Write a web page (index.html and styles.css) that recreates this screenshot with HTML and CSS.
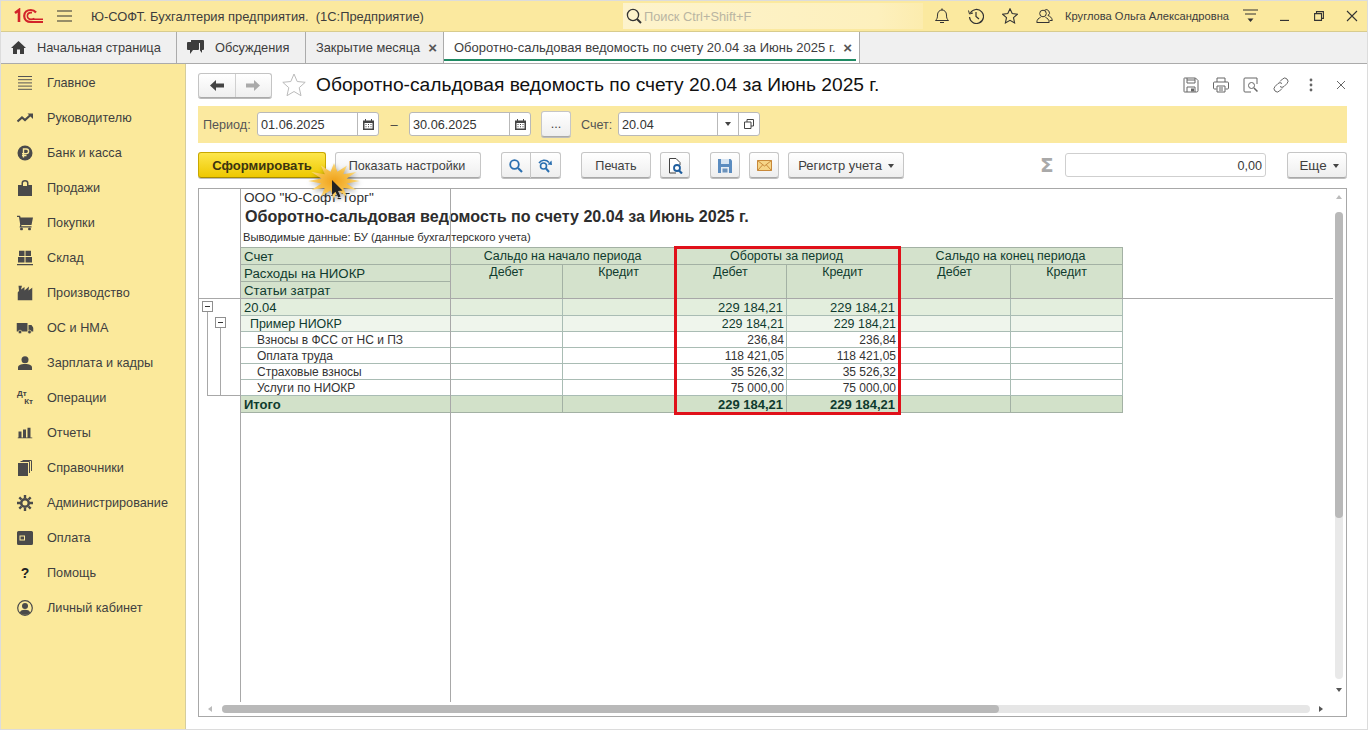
FILE: index.html
```html
<!DOCTYPE html>
<html lang="ru">
<head>
<meta charset="utf-8">
<title>1С</title>
<link rel="stylesheet" href="styles.css">
</head>
<body>
<div class="app">
  <header class="top">
    <svg class="logo" viewBox="0 0 30 16" width="30" height="16"><path d="M1 5 L5 2 V14" fill="none" stroke="#d2232a" stroke-width="2.6"/><path d="M22 4.5 C20.5 2.6 18.8 2 16.8 2 C13 2 10.2 4.5 10.2 8 C10.2 11.5 13 14 16.8 14 H29" fill="none" stroke="#d2232a" stroke-width="2.2"/><path d="M20.5 10.5 C19.6 11.1 18.3 11.4 17 11.4 C14.8 11.4 13.4 10 13.4 8 C13.4 6 14.8 4.6 17 4.6 H18 M16 11.2 H29" fill="none" stroke="#d2232a" stroke-width="1.6"/></svg>
    <svg class="burger" viewBox="0 0 15 12" width="15" height="12"><path d="M0 1h15M0 6h15M0 11h15" stroke="#333" stroke-width="1.2"/></svg>
    <div class="apptitle">Ю-СОФТ. Бухгалтерия предприятия.&nbsp; (1С:Предприятие)</div>
    <div class="search">
      <svg viewBox="0 0 16 16" width="16" height="16"><circle cx="7" cy="7" r="5.6" fill="none" stroke="#333" stroke-width="1.3"/><path d="M11 11l4 4" stroke="#333" stroke-width="2"/></svg>
      <span>Поиск Ctrl+Shift+F</span>
    </div>
    <svg class="ticon i-bell" viewBox="0 0 16 16" width="16" height="16"><path d="M1.5 12.5c1.5-1.5 2-2.5 2-5.5 0-3 2-5 4.5-5s4.500 2 4.500 5c0 3 .5 4 2 5.500z" fill="none" stroke="#333"/><path d="M6 14.500h4M8 .5v1.500" stroke="#333" stroke-width="1.200"/></svg>
    <svg class="ticon i-hist" viewBox="0 0 16 16" width="16" height="16"><path d="M2.400 5A7 7 0 1 1 1.500 9" fill="none" stroke="#333" stroke-width="1.200"/><path d="M0.500 2.500l1 3.500 3.500-1" fill="none" stroke="#333"/><path d="M8 4v4.500l3 2.500" fill="none" stroke="#333" stroke-width="1.200"/></svg>
    <svg class="ticon i-star" viewBox="0 0 16 16" width="16" height="16"><path d="M8 .8l2.200 4.800 5.200.6-3.900 3.500 1.100 5.200L8 12.300l-4.600 2.600 1.100-5.200L.6 6.200l5.200-.6z" fill="none" stroke="#333" stroke-width="1.100"/></svg>
    <svg class="ticon i-users" viewBox="0 0 17 16" width="17" height="16"><circle cx="7" cy="5.500" r="3.300" fill="none" stroke="#333"/><path d="M.8 14.500c0-3 2-4.500 3.700-5M13.200 14.500c0-3-2-4.500-3.700-5M.8 14.500h12.400" fill="none" stroke="#333"/><path d="M8.500 2.200a3 3 0 1 1 3.500 5.300c2 .8 4 2 4.300 5h-2.600" fill="none" stroke="#333"/></svg>
    <div class="username">Круглова Ольга Александровна</div>
    <svg class="ticon i-fn" viewBox="0 0 15 14" width="15" height="14"><path d="M0 1h15M2 5h11" stroke="#333" stroke-width="1.100"/><path d="M4.500 9.500h6l-3 3.500z" fill="#333"/></svg>
    <svg class="ticon i-min" viewBox="0 0 10 10" width="10" height="10"><path d="M0 9.500h9" stroke="#333" stroke-width="1.300"/></svg>
    <svg class="ticon i-max" viewBox="0 0 10 10" width="10" height="10"><path d="M2.500 2.500V.6h6.900v6.800H7.500M.6 2.600h6.900v6.800H.6z" fill="none" stroke="#333" stroke-width="1.100"/></svg>
    <svg class="ticon i-x" viewBox="0 0 12 12" width="12" height="12"><path d="M1 1l10 10M11 1L1 11" stroke="#333" stroke-width="1.100"/></svg>
  </header>

  <nav class="tabs">
    <div class="tab t-home"><svg viewBox="0 0 15 13" width="15" height="13"><path d="M7.500 0L15 7h-2v6H9V8.500H6V13H2V7H0z" fill="#3d3d3d"/></svg><span>Начальная страница</span></div>
    <div class="tab t-disc"><svg viewBox="0 0 17 15" width="17" height="15"><path d="M4 0h12a1 1 0 0 1 1 1v8a1 1 0 0 1-1 1h-1v3l-2-2.400V3H4z" fill="#3d3d3d"/><path d="M1 2h10a1 1 0 0 1 1 1v6a1 1 0 0 1-1 1H6l-3 4v-4H1a1 1 0 0 1-1-1V3a1 1 0 0 1 1-1z" fill="#3d3d3d"/></svg><span>Обсуждения</span></div>
    <div class="tab t-close"><span>Закрытие месяца</span><b class="tabx">×</b></div>
    <div class="tab t-active"><span>Оборотно-сальдовая ведомость по счету 20.04 за Июнь 2025 г.</span><b class="tabx">×</b></div>
  </nav>

  <div class="body">
    <aside class="side">
      <div class="item"><svg viewBox="0 0 16 14" width="16" height="14"><path d="M1 .5h14M1 3.700h14M1 6.900h14M1 10.100h14M1 13.300h14" stroke="#555" stroke-width="1"/></svg><span>Главное</span></div>
      <div class="item"><svg viewBox="0 0 17 10" width="17" height="10"><path d="M1 8.500l4.500-4 3 2.500L14 2" fill="none" stroke="#4a4a4a" stroke-width="2.200"/><path d="M11 .5h5.500V6z" fill="#4a4a4a"/></svg><span>Руководителю</span></div>
      <div class="item"><svg viewBox="0 0 16 16" width="16" height="16"><circle cx="8" cy="8" r="7.500" fill="#4a4a4a"/><path d="M6.500 12.500V4h2.800a2.300 2.300 0 0 1 0 4.600H5M5 10.500h4.500" fill="none" stroke="#fbe99b" stroke-width="1.400"/></svg><span>Банк и касса</span></div>
      <div class="item"><svg viewBox="0 0 14 16" width="14" height="16"><path d="M0 5h3.500V3a3.500 3 0 0 1 7 0v2H14v11H0z" fill="#4a4a4a"/><path d="M5 6V3a2 1.600 0 0 1 4 0v3z" fill="#fbe99b"/></svg><span>Продажи</span></div>
      <div class="item"><svg viewBox="0 0 16 15" width="16" height="15"><path d="M0 0h3l.600 2H16l-1.500 7.500H4.500l-.3 1.200H14.500V12H2.600L3.200 9 2 1.500H0z" fill="#4a4a4a"/><circle cx="4.500" cy="13.500" r="1.500" fill="#4a4a4a"/><circle cx="12.500" cy="13.500" r="1.500" fill="#4a4a4a"/></svg><span>Покупки</span></div>
      <div class="item"><svg viewBox="0 0 16 15" width="16" height="15"><path d="M2 0h5.500v5.500H2zM8.500 0H14v5.500H8.500zM1 6.500h6.500V12H1zM8.500 6.500H15V12H8.500zM0 13.500h16V15H0z" fill="#4a4a4a"/></svg><span>Склад</span></div>
      <div class="item"><svg viewBox="0 0 15 15" width="15" height="15"><path d="M1 0h3.500L3.500 4 7 1.500V5l4.500-4L11 5l4-3v13H0V7l1.500-1.500z" fill="#4a4a4a"/></svg><span>Производство</span></div>
      <div class="item"><svg viewBox="0 0 17 12" width="17" height="12"><path d="M0 1h11v8.500H0zM12 3h3l2 3v3.500h-5z" fill="#4a4a4a"/><circle cx="3.500" cy="10" r="1.800" fill="#4a4a4a" stroke="#fbe99b" stroke-width=".6"/><circle cx="13" cy="10" r="1.800" fill="#4a4a4a" stroke="#fbe99b" stroke-width=".6"/></svg><span>ОС и НМА</span></div>
      <div class="item"><svg viewBox="0 0 14 14" width="14" height="14"><circle cx="7" cy="3.800" r="3.500" fill="#4a4a4a"/><path d="M0 14v-2.500C0 9.500 2.500 8 7 8s7 1.500 7 3.500V14z" fill="#4a4a4a"/></svg><span>Зарплата и кадры</span></div>
      <div class="item"><span class="dtkt"><i>Дт</i><i>Кт</i></span><span>Операции</span></div>
      <div class="item"><svg viewBox="0 0 15 11" width="15" height="11"><path d="M1 4h3v6H1zM5.500 2h3v8h-3zM10 0h3v10h-3zM0 10h15v1H0z" fill="#4a4a4a"/></svg><span>Отчеты</span></div>
      <div class="item"><svg viewBox="0 0 14 16" width="14" height="16"><path d="M0 3h10v13H0z" fill="#4a4a4a"/><path d="M2.500 1.500h9V13M4.500 .5H13.500V11" fill="none" stroke="#4a4a4a"/></svg><span>Справочники</span></div>
      <div class="item"><svg viewBox="0 0 16 16" width="16" height="16"><circle cx="8" cy="8" r="3.800" fill="none" stroke="#4a4a4a" stroke-width="2.600"/><path d="M8 0v3M8 13v3M0 8h3M13 8h3M2.300 2.300l2.200 2.200M11.500 11.500l2.200 2.200M13.700 2.300l-2.200 2.200M4.500 11.500l-2.200 2.200" stroke="#4a4a4a" stroke-width="2.400"/></svg><span>Администрирование</span></div>
      <div class="item"><svg viewBox="0 0 16 14" width="16" height="14"><path d="M1.500 0H14.500a1.500 1.500 0 0 1 1.500 1.500v11a1.500 1.500 0 0 1-1.500 1.500H1.500A1.500 1.500 0 0 1 0 12.500V1.500A1.500 1.500 0 0 1 1.500 0z" fill="#4a4a4a"/><rect x="3" y="5" width="4.500" height="4" fill="none" stroke="#fbe99b"/></svg><span>Оплата</span></div>
      <div class="item"><span class="qmark">?</span><span>Помощь</span></div>
      <div class="item"><svg viewBox="0 0 16 16" width="16" height="16"><circle cx="8" cy="8" r="7.300" fill="none" stroke="#4a4a4a" stroke-width="1.200"/><circle cx="8" cy="6" r="3" fill="#4a4a4a"/><path d="M2.800 12.500C3.500 10.500 5.500 9.800 8 9.800s4.500.7 5.200 2.700C12 14 10 14.800 8 14.800s-4-.8-5.200-2.300z" fill="#4a4a4a"/></svg><span>Личный кабинет</span></div>
    </aside>

    <main class="main">
      <div class="titlebar">
        <div class="navpair">
          <div class="navb"><svg viewBox="0 0 14 11" width="14" height="11"><path d="M0 5.500L6 0v3.500h8v4H6V11z" fill="#444"/></svg></div>
          <div class="navb"><svg viewBox="0 0 14 11" width="14" height="11"><path d="M14 5.500L8 0v3.500H0v4h8V11z" fill="#aaa"/></svg></div>
        </div>
        <svg class="bigstar" viewBox="0 0 24 24" width="24" height="24"><path d="M12 1l3.200 7.500 8 .8-6 5.400 1.800 8L12 18.500l-7 4.200 1.800-8-6-5.400 8-.8z" fill="#fff" stroke="#bbb"/></svg>
        <h1>Оборотно-сальдовая ведомость по счету 20.04 за Июнь 2025 г.</h1>
        <div class="formtools">
          <svg viewBox="0 0 16 16" width="16" height="16"><path d="M1.500 1h11l2.500 2.500v10a1.500 1.500 0 0 1-1.500 1.500h-12A.5.5 0 0 1 1 14.500V1.500A.5.5 0 0 1 1.500 1z" fill="none" stroke="#666"/><path d="M4 1v5h8V1M4 3h8M4 15v-5h8v5" fill="none" stroke="#666"/><rect x="8" y="11.500" width="3" height="3" fill="#666"/></svg>
          <svg viewBox="0 0 16 16" width="16" height="16"><path d="M4 5V1h8v4M3.500 12H1.500A1 1 0 0 1 .5 11V6a1 1 0 0 1 1-1h13a1 1 0 0 1 1 1v5a1 1 0 0 1-1 1h-2" fill="none" stroke="#666"/><path d="M4 9h8v6H4zM6 11h4M6 13h4" fill="none" stroke="#666"/></svg>
          <svg viewBox="0 0 16 16" width="16" height="16"><path d="M8 15H2a1 1 0 0 1-1-1V2a1 1 0 0 1 1-1h12v6" fill="none" stroke="#666"/><circle cx="8.500" cy="8.500" r="3" fill="none" stroke="#666"/><path d="M11 11l3.500 3.500" stroke="#666" stroke-width="1.500"/></svg>
          <svg viewBox="0 0 16 16" width="16" height="16"><path d="M7 4.500L9.500 2a3 3 0 0 1 4.500 4.500L11 9.500a3 3 0 0 1-4 0M9 11.500L6.500 14A3 3 0 0 1 2 9.500L5 6.500a3 3 0 0 1 4 0" fill="none" stroke="#666"/></svg>
          <svg viewBox="0 0 16 16" width="16" height="16"><circle cx="8" cy="3" r="1.400" fill="#666"/><circle cx="8" cy="8" r="1.400" fill="#666"/><circle cx="8" cy="13" r="1.400" fill="#666"/></svg>
          <svg viewBox="0 0 16 16" width="16" height="16"><path d="M4 4l8 8M12 4l-8 8" stroke="#666"/></svg>
        </div>
      </div>

      <div class="filter">
        <label class="l-period">Период:</label>
        <div class="inp w-date"><span class="val">01.06.2025</span><span class="cell"><svg viewBox="0 0 11 11" width="11" height="11"><path d="M0 1.500h11V11H0zM2.500 0v2M8.500 0v2" fill="#444"/><path d="M2.500 0v2M8.500 0v2" stroke="#444"/><path d="M1.500 4h8v5.500h-8z" fill="#fff"/><path d="M2.500 5h1v1h-1zM5 5h1v1H5zM7.500 5h1v1h-1zM2.500 7.300h1v1h-1zM5 7.300h1v1H5zM7.500 7.300h1v1h-1z" fill="#444"/></svg></span></div>
        <span class="dash">–</span>
        <div class="inp w-date"><span class="val">30.06.2025</span><span class="cell"><svg viewBox="0 0 11 11" width="11" height="11"><path d="M0 1.500h11V11H0zM2.500 0v2M8.500 0v2" fill="#444"/><path d="M2.500 0v2M8.500 0v2" stroke="#444"/><path d="M1.500 4h8v5.500h-8z" fill="#fff"/><path d="M2.500 5h1v1h-1zM5 5h1v1H5zM7.500 5h1v1h-1zM2.500 7.300h1v1h-1zM5 7.300h1v1H5zM7.500 7.300h1v1h-1z" fill="#444"/></svg></span></div>
        <div class="btn b-dots">...</div>
        <label class="l-acc">Счет:</label>
        <div class="inp w-acc"><span class="val">20.04</span><span class="cell"><i class="caret"></i></span><span class="cell"><svg viewBox="0 0 10 10" width="10" height="10"><path d="M3 3V.5h6.500V7H7M.5 3h6.500v6.500H.5z" fill="none" stroke="#444"/></svg></span></div>
      </div>

      <div class="cmd">
        <div class="btn b-go">Сформировать</div>
        <div class="btn b-show">Показать настройки</div>
        <div class="pair">
          <div class="btn half"><svg viewBox="0 0 14 14" width="14" height="14"><circle cx="5.500" cy="5.500" r="4.300" fill="none" stroke="#2a6fb0" stroke-width="1.800"/><path d="M9 9l4 4" stroke="#2a6fb0" stroke-width="2.200"/></svg></div>
          <div class="btn half"><svg viewBox="0 0 15 14" width="15" height="14"><circle cx="5.500" cy="7" r="3" fill="none" stroke="#2a6fb0" stroke-width="1.600"/><path d="M8 9.500l3 3.500" stroke="#2a6fb0" stroke-width="2"/><path d="M1 4C3 1 8 0 11 3.500" fill="none" stroke="#2a6fb0" stroke-width="1.500"/><path d="M9.500 5.500L14 6l-.5-4.500z" fill="#2a6fb0"/></svg></div>
        </div>
        <div class="btn b-print">Печать</div>
        <div class="btn b-ico b-prev"><svg viewBox="0 0 15 16" width="15" height="16"><path d="M1.500 15V.5H8l4 4V7" fill="#fff" stroke="#444"/><path d="M1.500 15H8" stroke="#444"/><circle cx="9" cy="10" r="3" fill="#fff" stroke="#1f5e9e" stroke-width="1.800"/><path d="M11 12.500l3 3" stroke="#1f5e9e" stroke-width="2.200"/></svg></div>
        <div class="btn b-ico b-save"><svg viewBox="0 0 14 14" width="14" height="14"><path d="M0 0h12.500L14 1.500V14H0z" fill="#5b8cc0"/><path d="M3 0h8v5H3z" fill="#d7e5f3"/><path d="M3 8h8v6H3z" fill="#e8eef5"/><path d="M4.500 9.500h5v4h-5z" fill="#6c93bb"/></svg></div>
        <div class="btn b-ico b-mail"><svg viewBox="0 0 15 11" width="15" height="11"><path d="M.5.500h14v10H.500z" fill="#f6d587" stroke="#c8893a"/><path d="M.5.500l7 5.500 7-5.500M.5 10.500l5-5.500M14.500 10.500l-5-5.500" fill="none" stroke="#c8893a"/></svg></div>
        <div class="btn b-reg">Регистр учета<i class="caret"></i></div>
        <div class="sigma">Σ</div>
        <div class="sumfield">0,00</div>
        <div class="btn b-more">Еще<i class="caret"></i></div>
      </div>

      <section class="report">
        <div class="gutter">
          <div class="tree t1"></div>
          <div class="tree t2"></div>
          <div class="minus m1"></div>
          <div class="minus m2"></div>
        </div>
        <div class="sheet">
          <div class="org">ООО "Ю-Софт-Торг"</div>
          <div class="rtitle">Оборотно-сальдовая ведомость по счету 20.04 за Июнь 2025 г.</div>
          <div class="rnote">Выводимые данные: БУ (данные бухгалтерского учета)</div>
          <table class="osv">
            <colgroup><col class="c0"><col class="c1"><col class="c2"><col class="c1"><col class="c2"><col class="c1"><col class="c2"></colgroup>
            <thead>
              <tr class="h1"><th class="left">Счет</th><th colspan="2">Сальдо на начало периода</th><th colspan="2">Обороты за период</th><th colspan="2">Сальдо на конец периода</th></tr>
              <tr class="h2"><th class="left">Расходы на НИОКР</th><th rowspan="2" class="sub">Дебет</th><th rowspan="2" class="sub">Кредит</th><th rowspan="2" class="sub">Дебет</th><th rowspan="2" class="sub">Кредит</th><th rowspan="2" class="sub">Дебет</th><th rowspan="2" class="sub">Кредит</th></tr>
              <tr class="h3"><th class="left">Статьи затрат</th></tr>
            </thead>
            <tbody>
              <tr class="g1"><td class="name">20.04</td><td></td><td></td><td>229 184,21</td><td>229 184,21</td><td></td><td></td></tr>
              <tr class="g2"><td class="name n1">Пример НИОКР</td><td></td><td></td><td>229 184,21</td><td>229 184,21</td><td></td><td></td></tr>
              <tr class="d"><td class="name n2">Взносы в ФСС от НС и ПЗ</td><td></td><td></td><td>236,84</td><td>236,84</td><td></td><td></td></tr>
              <tr class="d"><td class="name n2">Оплата труда</td><td></td><td></td><td>118 421,05</td><td>118 421,05</td><td></td><td></td></tr>
              <tr class="d"><td class="name n2">Страховые взносы</td><td></td><td></td><td>35 526,32</td><td>35 526,32</td><td></td><td></td></tr>
              <tr class="d"><td class="name n2">Услуги по НИОКР</td><td></td><td></td><td>75 000,00</td><td>75 000,00</td><td></td><td></td></tr>
              <tr class="tot"><td class="name">Итого</td><td></td><td></td><td>229 184,21</td><td>229 184,21</td><td></td><td></td></tr>
            </tbody>
          </table>
        </div>
        <div class="freeze-v"></div>
        <div class="freeze-h"></div>
        <div class="redbox"></div>
        <div class="vtrack"><div class="vthumb"></div></div>
        <div class="htrack"><div class="hthumb"></div></div>
        <i class="arr a-up"></i><i class="arr a-down"></i><i class="arr a-left"></i><i class="arr a-right"></i>
      </section>
    </main>
  </div>

  <svg class="spark" viewBox="0 0 54 38" width="54" height="38">
    <defs><radialGradient id="sg" cx=".5" cy=".5" r=".5"><stop offset="0" stop-color="#f0a21a"/><stop offset=".6" stop-color="#f6bd45"/><stop offset="1" stop-color="#fbe08a"/></radialGradient></defs>
    <path d="M54 19L40.600 21.500 50.500 28 37.200 25.700 41 34.600 31.400 28.200 28 37 24.600 28.200 15 34.600 18.800 25.700 5.500 28 15.400 21.500 2 19 15.400 16.500 5.500 10 18.800 12.300 15 3.400 24.600 9.800 28 1 31.400 9.800 41 3.400 37.200 12.300 50.500 10 40.600 16.500z" fill="url(#sg)"/>
    <path d="M26 18v15l3.500-3.200 2.800 5.700 2.300-1.100-2.700-5.500 4.600-.4z" fill="#222"/>
  </svg>
</div>
</body>
</html>
```
FILE: styles.css
```css
* { box-sizing: border-box; }
html, body { margin: 0; padding: 0; height: 100%; background: #fff; }
body { font-family: "Liberation Sans", Arial, sans-serif; font-size: 13px; color: #3a3a3a; overflow: hidden; }
.app { position: relative; width: 1368px; height: 730px; border: 1px solid #dcdcdc; display: flex; flex-direction: column; overflow: hidden; }

/* top bar */
.top { height: 31px; flex: none; background: #fbe99f; border-bottom: 1px solid #d8cc8e; display: flex; align-items: center; }
.logo { margin-left: 13px; }
.burger { margin-left: 13px; }
.apptitle { margin-left: 19px; width: 532px; font-size: 12.9px; color: #3d3d3d; white-space: nowrap; }
.search { width: 300px; height: 26px; display: flex; align-items: center; gap: 2px; padding-left: 3px; font-size: 12.8px; color: #b9b5a2; background: linear-gradient(90deg, #fdf3cc, #fdf0bd 85%, #fcecae); }
.ticon { flex: none; }
.i-bell { margin-left: 11px; }
.i-hist { margin-left: 18px; }
.i-star { margin-left: 18px; }
.i-users { margin-left: 18px; }
.username { margin-left: 12px; font-size: 11.15px; color: #3d3d3d; white-space: nowrap; width: 166px; }
.i-fn { margin-left: 12px; }
.i-min { margin-left: 22px; }
.i-max { margin-left: 24px; }
.i-x { margin-left: 22px; }

/* tabs */
.tabs { height: 32px; flex: none; background: #f0f0f0; border-bottom: 1px solid #ababab; display: flex; }
.tab { height: 31px; display: flex; align-items: center; border-right: 1px solid #ababab; color: #3d3d3d; font-size: 12.8px; white-space: nowrap; }
.t-home { width: 176px; padding-left: 10px; gap: 11px; }
.t-disc { width: 129px; padding-left: 10px; gap: 11px; }
.t-close { width: 138px; padding-left: 10px; justify-content: space-between; padding-right: 6px; }
.t-active { width: 416px; padding-left: 10px; padding-right: 7px; justify-content: space-between; background: #fff; position: relative; font-size: 13px; }
.t-active::after { content: ""; position: absolute; left: 0; right: 3px; bottom: 2px; height: 2px; background: #1f8a63; }
.tabx { font-size: 15px; line-height: 1; color: #555; }

/* body */
.body { flex: 1; display: flex; min-height: 0; }
.side { width: 185px; flex: none; background: #fbe99b; border-right: 1px solid #d5cd9d; padding-top: 1px; }
.item { height: 35px; display: flex; align-items: center; position: relative; padding-left: 46px; font-size: 12.7px; color: #3f3f3f; }
.item > svg, .item > .dtkt, .item > .qmark { position: absolute; left: 24px; top: 50%; transform: translate(-50%, -50%); }
.dtkt { display: flex; flex-direction: column; width: 16px; font-size: 8px; font-weight: bold; line-height: 8px; color: #444; }
.dtkt i { font-style: normal; }
.dtkt i + i { text-align: right; }
.qmark { font-size: 14px; font-weight: bold; color: #222; }

.main { flex: 1; min-width: 0; padding: 0 20px 0 12px; }
.titlebar { height: 42px; display: flex; align-items: center; position: relative; }
.navpair { width: 74px; height: 25px; display: flex; border: 1px solid #c4c4c4; border-bottom-color: #aaa; border-radius: 3px; background: linear-gradient(#fff, #efefef); box-shadow: 0 1px 0 #bbb; }
.navb { flex: 1; display: flex; align-items: center; justify-content: center; }
.navb + .navb { border-left: 1px solid #d0d0d0; }
.bigstar { margin-left: 10px; }
h1 { margin: 0 0 0 10px; font-size: 19.2px; font-weight: normal; color: #111; white-space: nowrap; }
.formtools { margin-left: auto; display: flex; gap: 14px; margin-right: -2px; }

.filter { height: 37px; background: #fbe99f; display: flex; align-items: center; padding-bottom: 1px; }
.filter label { color: #555; font-size: 12.6px; padding-top: 1px; }
.l-period { margin-left: 5px; width: 54px; }
.l-acc { margin-left: 10px; width: 37px; }
.dash { width: 30px; text-align: center; color: #444; }
.inp { height: 24px; background: #fff; border: 1px solid #b9b9b9; border-radius: 3px; display: flex; align-items: center; color: #333; font-size: 12.7px; }
.w-date { width: 122px; }
.w-acc { width: 142px; }
.val { flex: 1; padding: 1px 0 0 3px; }
.cell { width: 21px; height: 100%; border-left: 1px solid #b9b9b9; display: flex; align-items: center; justify-content: center; }
.caret { display: inline-block; width: 0; height: 0; border-left: 3.5px solid transparent; border-right: 3.5px solid transparent; border-top: 4px solid #444; }

.btn { height: 26px; padding-top: 1px; display: flex; align-items: center; justify-content: center; background: linear-gradient(#fff, #eeeeee); border: 1px solid #c6c6c6; border-bottom-color: #a9a9a9; border-radius: 3px; box-shadow: 0 1px 0 #bdbdbd; color: #3f3f3f; font-size: 12.6px; white-space: nowrap; flex: none; }
.b-dots { width: 30px; margin-left: 10px; margin-top: -1px; }
.cmd { height: 45px; display: flex; align-items: flex-start; padding-top: 9px; }
.b-go { width: 128px; font-size: 13.1px; font-weight: bold; color: #3b3410; background: linear-gradient(#fde64c, #eec800); border-color: #c9a800; border-bottom-color: #a78c00; }
.b-show { width: 146px; margin-left: 9px; padding-right: 2px; }
.pair { display: flex; margin-left: 20px; width: 60px; }
.half { width: 30px; border-radius: 3px 0 0 3px; }
.half + .half { border-left: 0; border-radius: 0 3px 3px 0; }
.b-print { width: 70px; margin-left: 20px; }
.b-ico { width: 30px; }
.b-prev { margin-left: 9px; }
.b-save { margin-left: 20px; }
.b-mail { margin-left: 9px; }
.b-reg { width: 116px; margin-left: 9px; gap: 6px; font-size: 13px; }
.sigma { width: 13px; margin-left: 136px; font-family: "DejaVu Sans", sans-serif; font-size: 20px; font-weight: bold; color: #a9a9a9; line-height: 26px; }
.sumfield { width: 201px; height: 24px; margin-left: 12px; margin-top: 1px; border: 1px solid #cfcfcf; border-radius: 3px; background: #fff; text-align: right; padding-right: 3px; line-height: 24px; font-size: 12.6px; }
.b-more { width: 60px; margin-left: 21px; gap: 6px; padding-left: 4px; font-size: 13.4px; }

/* report */
.report { position: relative; height: 529px; border: 1px solid #a8a8a8; display: flex; overflow: hidden; background: #fff; }
.gutter { width: 42px; flex: none; height: 513px; border-right: 1px solid #a8a8a8; position: relative; }
.tree { position: absolute; border: 1px solid #a8a8a8; border-top: 0; border-right: 0; }
.t1 { left: 8px; top: 118px; width: 34px; height: 89px; }
.t2 { left: 21px; top: 134px; width: 1px; height: 73px; border-bottom: 0; }
.minus { position: absolute; width: 11px; height: 11px; border: 1px solid #8f8f8f; background: #fff; }
.minus::after { content: ""; position: absolute; left: 2px; right: 2px; top: 4px; height: 1px; background: #333; }
.m1 { left: 3px; top: 112px; }
.m2 { left: 16px; top: 128px; }
.sheet { flex: 1; min-width: 0; color: #2d2d2d; }
.org { height: 17px; padding-left: 3px; font-size: 13.6px; line-height: 17px; }
.rtitle { height: 22px; padding-left: 4px; font-size: 16.1px; line-height: 20px; font-weight: bold; white-space: nowrap; }
.rnote { height: 19px; padding-left: 2px; font-size: 11.2px; line-height: 19px; }
.osv { border-collapse: collapse; table-layout: fixed; width: 883px; margin-left: -1px; color: #0f3b2e; font-size: 12.45px; }
.c0 { width: 210px; } .c1 { width: 112px; } .c2 { width: 112px; }
.osv th { background: #d4e2cc; border: 1px solid #a3b1a4; font-weight: normal; padding: 1px 2px 0; vertical-align: top; line-height: 15px; height: 17px; text-align: center; }
.osv th.left { text-align: left; font-size: 13.25px; padding-left: 3px; }
.osv th.sub { padding-top: 0; }
.osv td { border: 1px solid #a9bcb4; padding: 0 2px 0 3px; text-align: right; height: 16px; line-height: 14px; white-space: nowrap; }
.osv td.name { text-align: left; border-right-color: #a3b1a4; }
.g1 td { background: #e3eedd; height: 17px; font-size: 13px; padding-top: 1px !important; padding-right: 3px !important; }
.g2 td { background: #eff5ec; }
.d td { background: #fff; color: #333; font-size: 12px; }
.tot td { background: #d2e1c9; height: 17px; font-weight: bold; font-size: 13px; padding-top: 1px !important; padding-right: 3px !important; border-color: #a3b1a4; }
.n1 { padding-left: 9px !important; }
.n2 { padding-left: 16px !important; }

.freeze-v { position: absolute; left: 251px; top: 0; width: 1px; height: 513px; background: #a8a8a8; }
.freeze-h { position: absolute; left: 0; right: 13px; top: 109px; height: 1px; background: #a8a8a8; }
.redbox { position: absolute; left: 475px; top: 57px; width: 227px; height: 169px; border: 3px solid #e0101a; }
.vtrack { position: absolute; right: 3px; top: 23px; width: 8px; height: 467px; background: #e9e9e9; border-radius: 4px; }
.vthumb { height: 306px; background: #b9b9b9; border-radius: 4px; }
.htrack { position: absolute; left: 23px; bottom: 3px; width: 1088px; height: 8px; background: #e6e6e6; border-radius: 4px; }
.hthumb { width: 777px; height: 8px; background: #b9b9b9; border-radius: 4px; }
.arr { position: absolute; width: 0; height: 0; }
.a-up { right: 4px; top: 6px; border-left: 3px solid transparent; border-right: 3px solid transparent; border-bottom: 4px solid #bbb; }
.a-down { right: 4px; top: 499px; border-left: 3px solid transparent; border-right: 3px solid transparent; border-top: 4px solid #555; }
.a-left { left: 9px; bottom: 4px; border-top: 3px solid transparent; border-bottom: 3px solid transparent; border-right: 4px solid #bbb; }
.a-right { left: 1120px; bottom: 4px; border-top: 3px solid transparent; border-bottom: 3px solid transparent; border-left: 4px solid #555; }

.spark { position: absolute; left: 305px; top: 161px; filter: drop-shadow(1px 2px 2px rgba(0,0,0,.35)); }
```
